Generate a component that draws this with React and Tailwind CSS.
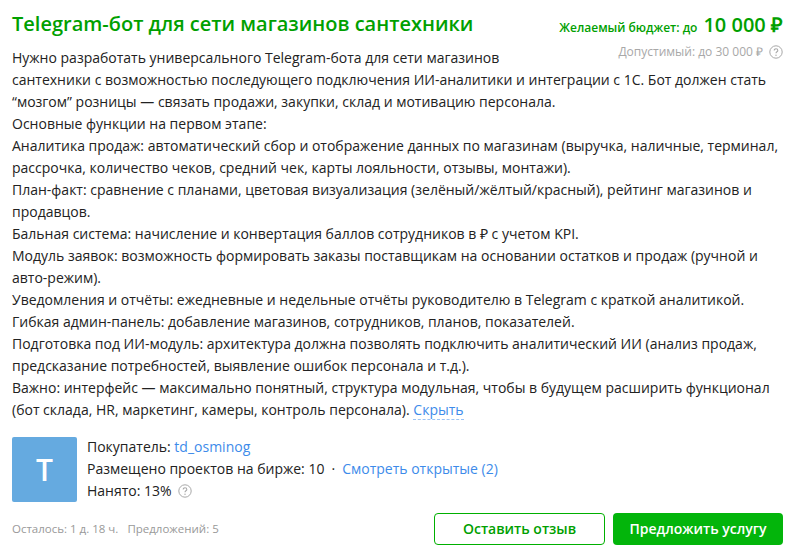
const Q = ({ s = 14 }) => (
  <svg width={s} height={s} viewBox="0 0 14 14" className="inline-block shrink-0" fill="none">
    <circle cx="7" cy="7" r="6.2" stroke="#a8a8a8" strokeWidth="1" />
    <path d="M5.2 5.5c0-1 .8-1.7 1.8-1.7s1.8.7 1.8 1.6c0 1.4-1.8 1.4-1.8 2.9" stroke="#a8a8a8" strokeWidth="1.1" />
    <circle cx="7" cy="10.2" r=".7" fill="#a8a8a8" />
  </svg>
);

const lines = [
  "сантехники с возможностью последующего подключения ИИ-аналитики и интеграции с 1С. Бот должен стать “мозгом” розницы — связать продажи, закупки, склад и мотивацию персонала.",
  "Основные функции на первом этапе:",
  "Аналитика продаж: автоматический сбор и отображение данных по магазинам (выручка, наличные, терминал, рассрочка, количество чеков, средний чек, карты лояльности, отзывы, монтажи).",
  "План-факт: сравнение с планами, цветовая визуализация (зелёный/жёлтый/красный), рейтинг магазинов и продавцов.",
  "Бальная система: начисление и конвертация баллов сотрудников в ₽ с учетом KPI.",
  "Модуль заявок: возможность формировать заказы поставщикам на основании остатков и продаж (ручной и авто-режим).",
  "Уведомления и отчёты: ежедневные и недельные отчёты руководителю в Telegram с краткой аналитикой.",
  "Гибкая админ-панель: добавление магазинов, сотрудников, планов, показателей.",
  "Подготовка под ИИ-модуль: архитектура должна позволять подключить аналитический ИИ (анализ продаж, предсказание потребностей, выявление ошибок персонала и т.д.).",
];

export default function App() {
  return (
    <div className="w-[795px] h-[555px] bg-white overflow-hidden px-3 pt-[9px] font-['Open_Sans',sans-serif] text-[14px] leading-[22px] text-[#222]">
      <div className="flex justify-between items-start">
        <h1 className="text-[20px] leading-[30px] font-semibold text-[#00a000]">Telegram-бот для сети магазинов сантехники</h1>
        <div className="flex items-baseline gap-[6px] pt-[2px] pr-0 text-[#00a000] font-semibold">
          <span className="text-[12px]">Желаемый бюджет: до</span>
          <span className="text-[20px] leading-[28px]">10 000 ₽</span>
        </div>
      </div>
      <div className="mt-[8px]">
        <div className="float-right w-[200px] h-[22px] -mt-[6px] flex items-center justify-end gap-[6px] text-[12px] text-[#a8a8a8]">
          <span>Допустимый: до 30 000 ₽</span>
          <Q />
        </div>
        Нужно разработать универсального Telegram-бота для сети магазинов
        <br />
        {lines.map((l, i) => (
          <div key={i}>{l}</div>
        ))}
        <div>
          Важно: интерфейс — максимально понятный, структура модульная, чтобы в будущем расширить функционал (бот склада, HR, маркетинг, камеры, контроль персонала).{" "}
          <span className="text-[#3d8bea] border-b border-dashed border-[#9cc4f5]">Скрыть</span>
        </div>
      </div>
      <div className="flex gap-[10px] mt-[16px]">
        <div className="w-[65px] h-[65px] rounded-[2px] bg-[#65aae0] flex items-center justify-center text-white text-[30px] font-semibold">T</div>
        <div className="-mt-[1px]">
          <div>Покупатель: <span className="text-[#3d8bea]">td_osminog</span></div>
          <div>
            Размещено проектов на бирже: 10<span className="mx-[7px]">·</span>
            <span className="text-[#3d8bea]">Смотреть открытые (2)</span>
          </div>
          <div className="flex items-center gap-[6px]">Нанято: 13% <Q /></div>
        </div>
      </div>
      <div className="flex items-center justify-between mt-[11px]">
        <div className="text-[11.5px] text-[#999] flex gap-[9px]">
          <span>Осталось: 1 д. 18 ч.</span>
          <span>Предложений: 5</span>
        </div>
        <div className="flex gap-[8px]">
          <button className="w-[171px] h-[32px] rounded-[4px] border border-[#00b000] bg-white text-[#00a000] font-semibold text-[14px]">Оставить отзыв</button>
          <button className="w-[170px] h-[32px] rounded-[4px] bg-[#03b50b] text-white font-semibold text-[14px]">Предложить услугу</button>
        </div>
      </div>
    </div>
  );
}
